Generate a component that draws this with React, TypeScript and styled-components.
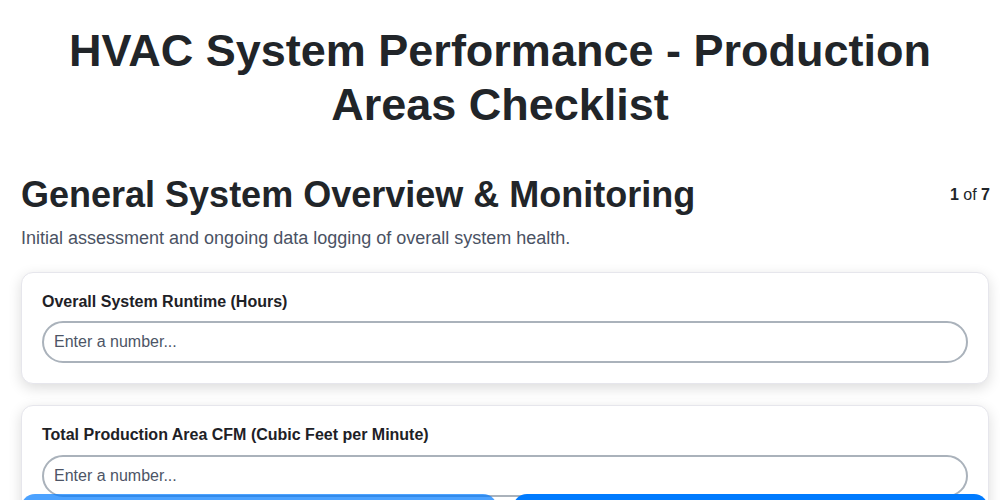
import React from "react";
import styled, { createGlobalStyle } from "styled-components";

const GlobalStyle = createGlobalStyle`
  html, body {
    margin: 0;
    padding: 0;
    background: #ffffff;
    font-family: "Liberation Sans", Arial, Helvetica, sans-serif;
    color: #212529;
  }
  * { box-sizing: border-box; }
`;

const Page = styled.div`
  padding: 24px 10px 80px 20px;
`;

const Title = styled.h1`
  margin: 0 0 41px;
  padding: 0 10px 0 0;
  text-align: center;
  font-size: 45px;
  line-height: 1.2;
  font-weight: 700;
  color: #212529;
`;

const SectionHeader = styled.div`
  display: flex;
  align-items: center;
  justify-content: space-between;
  padding-left: 1px;
`;

const SectionTitle = styled.h2`
  margin: 0;
  font-size: 36px;
  line-height: 1.2;
  font-weight: 700;
  color: #212529;
`;

const Progress = styled.div`
  font-size: 16px;
  color: #212529;
  b { font-weight: 700; }
`;

const SectionDesc = styled.p`
  margin: 9px 0 20px 1px;
  font-size: 18px;
  line-height: 1.5;
  color: #4a5263;
`;

const Card = styled.div`
  margin: 0 1px 21px 1px;
  padding: 19px 20px 20px;
  background: #ffffff;
  border: 1px solid #e6e6ec;
  border-radius: 12px;
  box-shadow: 0 4px 14px rgba(0, 0, 0, 0.14);
`;

const Label = styled.label`
  display: block;
  margin-bottom: 10px;
  font-size: 16px;
  line-height: 1.2;
  font-weight: 700;
  color: #1e2126;
`;

const Input = styled.input`
  display: block;
  width: 100%;
  height: 42px;
  padding: 0 10px;
  border: 2px solid #aab2bb;
  border-radius: 21px;
  background: #ffffff;
  font-family: "Liberation Sans", Arial, Helvetica, sans-serif;
  font-size: 16px;
  color: #212529;
  outline: none;
  &::placeholder { color: #4d5566; opacity: 1; }
`;

const Nav = styled.nav`
  position: fixed;
  left: 21px;
  right: 12px;
  bottom: -38px;
  display: grid;
  grid-template-columns: 1fr 1fr;
  gap: 16px;
`;

const NavButton = styled.button<{ $disabled?: boolean }>`
  height: 44px;
  border: none;
  border-radius: 14px;
  background: #007bff;
  opacity: ${(p) => (p.$disabled ? 0.7 : 1)};
  color: #ffffff;
  font-family: "Liberation Sans", Arial, Helvetica, sans-serif;
  font-size: 16px;
  font-weight: 700;
`;

const fields = [
  "Overall System Runtime (Hours)",
  "Total Production Area CFM (Cubic Feet per Minute)",
];

export default function App() {
  return (
    <>
      <GlobalStyle />
      <Page>
        <Title>HVAC System Performance - Production Areas Checklist</Title>
        <SectionHeader>
          <SectionTitle>General System Overview &amp; Monitoring</SectionTitle>
          <Progress>
            <b>1</b> of <b>7</b>
          </Progress>
        </SectionHeader>
        <SectionDesc>
          Initial assessment and ongoing data logging of overall system health.
        </SectionDesc>
        {fields.map((f) => (
          <Card key={f}>
            <Label>{f}</Label>
            <Input type="number" placeholder="Enter a number..." />
          </Card>
        ))}
      </Page>
      <Nav>
        <NavButton $disabled>Previous</NavButton>
        <NavButton>Next</NavButton>
      </Nav>
    </>
  );
}
